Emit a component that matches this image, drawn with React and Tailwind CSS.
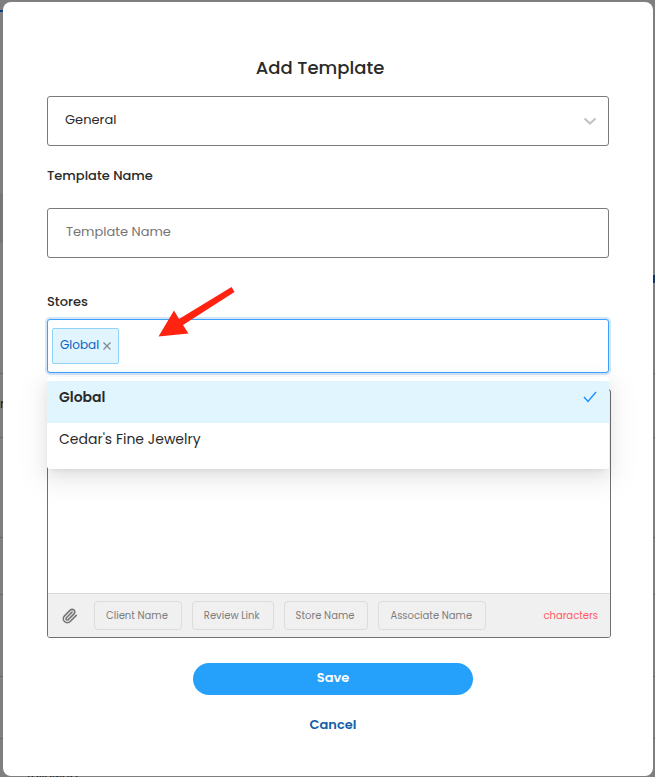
import React, { useState } from 'react'

const STORES = ['Global', "Cedar's Fine Jewelry"]
const TOKENS = ['Client Name', 'Review Link', 'Store Name', 'Associate Name']

// the message list that stays visible around the dialog
function Backdrop(){
  return (
    <div aria-hidden="true" className="absolute inset-0 flex flex-col overflow-hidden bg-[#7f7f7f] text-[12px] text-[#1a1a1a]">
      <div className="h-3 w-1/2 shrink-0 border-b-2 border-[#0b3f8a]"/>
      <div className="h-[181px] shrink-0"/>
      <div className="h-[50px] w-1/2 shrink-0 bg-[#777777]"/>
      <div className="h-8 shrink-0"/>
      <div className="h-2 shrink-0 self-end w-1 bg-[#0b3566]"/>
      <div className="h-[91px] shrink-0 border-b border-[#686868]"/>
      <div className="h-16 shrink-0 border-b border-[#686868] pt-5 leading-5">r</div>
      <div className="h-[100px] shrink-0 border-b border-[#686868]"/>
      <div className="h-[57px] shrink-0 border-b border-[#686868]"/>
      <div className="h-[82px] shrink-0 border-b border-[#686868]"/>
      <div className="h-[62px] shrink-0 border-b border-[#686868]"/>
      <div className="pt-7 pl-[27px] leading-5">followup</div>
    </div>
  )
}

function Arrow(){
  return (
    <svg className="absolute left-[110px] -top-8 pointer-events-none" width="78" height="52" viewBox="0 0 78 52" fill="#ff2310" aria-hidden="true">
      <path d="M1.500 49.500 17 23.500 22 32 74.500 0 77.500 5 26 38 31.500 46.500Z"/>
    </svg>
  )
}

export default function App(){
  const [type, setType] = useState('General')
  const [name, setName] = useState('')
  const [stores, setStores] = useState(['Global'])
  const [body, setBody] = useState('')

  function toggle(s){
    setStores(prev => prev.includes(s) ? prev.filter(x => x !== s) : [...prev, s])
  }

  return (
    <div className="relative font-['Poppins','Inter',sans-serif] text-[#2a2a2a]">
      <Backdrop/>
      <div className="relative min-h-screen flex flex-col pt-[2px] pb-px pl-[3px] pr-[2px]">
        <div role="dialog" aria-label="Add Template" className="grow rounded-lg bg-white px-11 pt-[52px] pb-9">
          <h1 className="pr-4 text-center text-[18px] leading-7 font-medium">Add Template</h1>

          <div className="relative mt-[14px]">
            <select aria-label="Template type" value={type} onChange={e=>setType(e.target.value)} className="block w-full h-[50px] appearance-none rounded-[3px] border border-[#7a7a7a] bg-white pl-[17px] pb-[2px] text-[13px] outline-none">
              <option>General</option>
            </select>
            <svg className="absolute right-3 top-[21px] pointer-events-none" width="14" height="9" viewBox="0 0 14 9" fill="none" stroke="#c4c4c4" strokeWidth="2.200" aria-hidden="true">
              <path d="M1.500 1.500 7 6.500 12.500 1.500"/>
            </svg>
          </div>

          <label htmlFor="name" className="mt-5 block text-[13px] leading-5 font-medium">Template Name</label>
          <input id="name" value={name} onChange={e=>setName(e.target.value)} placeholder="Template Name" className="mt-[22px] block w-full h-[50px] rounded-[3px] border border-[#7a7a7a] px-[18px] pb-[2px] text-[13px] outline-none placeholder:text-[#757575]"/>

          <label htmlFor="stores" className="mt-[34px] block text-[13px] leading-5 font-medium">Stores</label>
          <div className="relative z-10 mt-[7px]">
            <div className="flex h-[54px] items-center rounded-[3px] border border-[#40a0fa] bg-white px-1 shadow-[0_0_0_2px_#cfe6fd]">
              {stores.map(s => (
                <span key={s} className="flex h-9 items-center gap-1 rounded-[2px] border border-[#8fd3fb] bg-[#e1f5fe] px-[7px] text-[12px] text-[#0b63c5]">
                  <span className="pb-[2px]">{s}</span>
                  <button type="button" aria-label={'Remove ' + s} onClick={()=>toggle(s)}>
                    <svg width="8" height="8" viewBox="0 0 8 8" stroke="#7c868c" strokeWidth="1.200" aria-hidden="true"><path d="M0.500 0.500 7.500 7.500M7.500 0.500 0.500 7.500"/></svg>
                  </button>
                </span>
              ))}
              <input id="stores" role="combobox" aria-expanded="true" aria-controls="store-list" className="ml-1 h-8 min-w-0 grow bg-transparent text-[13px] outline-none"/>
            </div>
            <Arrow/>
            <div id="store-list" role="listbox" className="absolute inset-x-0 top-[58px] rounded-[3px] bg-white py-1 shadow-[0_3px_6px_-4px_rgba(0,0,0,0.12),0_6px_16px_0_rgba(0,0,0,0.08),0_9px_28px_8px_rgba(0,0,0,0.05)]">
              {STORES.map(s => (
                <button key={s} type="button" role="option" aria-selected={stores.includes(s)} onClick={()=>toggle(s)}
                  className="flex h-[42px] w-full items-center justify-between px-3 pb-[10px] text-left text-[14px] aria-selected:bg-[#e1f5fe] aria-selected:font-semibold">
                  {s}
                  {stores.includes(s) && (
                    <svg width="14" height="12" viewBox="0 0 14 12" fill="none" stroke="#1890ff" strokeWidth="1.400" aria-hidden="true"><path d="M1 6 5 10.500 13 1"/></svg>
                  )}
                </button>
              ))}
            </div>
          </div>

          <div className="-mr-[2px] mt-4 rounded-[3px] border border-[#707070] bg-white">
            <textarea aria-label="Message" value={body} onChange={e=>setBody(e.target.value)} className="block h-[203px] w-full resize-none p-4 text-[13px] outline-none"/>
            <div className="flex h-11 items-center rounded-b-[2px] border-t border-[#d9d9d9] bg-[#f0f0f0] pl-[14px] pr-3 text-[10px] text-[#7d7d7d]">
              <button type="button" aria-label="Attach file" className="mr-4">
                <svg width="16" height="16" viewBox="0 0 24 24" fill="none" stroke="#757575" strokeWidth="2.400" strokeLinecap="round" strokeLinejoin="round" aria-hidden="true">
                  <path d="m21.440 11.050-9.190 9.190a6 6 0 0 1-8.490-8.490l8.570-8.570A4 4 0 1 1 18 8.840l-8.590 8.570a2 2 0 0 1-2.830-2.830l8.490-8.480"/>
                </svg>
              </button>
              <div className="flex gap-[10px]">
                {TOKENS.map(t => (
                  <button key={t} type="button" onClick={()=>setBody(b => b + '{' + t + '}')} className="h-[29px] whitespace-nowrap rounded-[4px] border border-[#dcdcdc] pl-[11px] pr-[13px]">{t}</button>
                ))}
              </div>
              <span className="ml-auto text-[#ff5a5f]">characters</span>
            </div>
          </div>

          <div className="mt-[25px] flex flex-col items-center gap-5 pl-[10px] font-semibold">
            <button type="button" className="h-8 w-[280px] rounded-full bg-[#26a1fb] pb-[2px] text-[13px] text-white">Save</button>
            <button type="button" className="text-[13px] leading-5 text-[#1260a8]">Cancel</button>
          </div>
        </div>
      </div>
    </div>
  )
}
